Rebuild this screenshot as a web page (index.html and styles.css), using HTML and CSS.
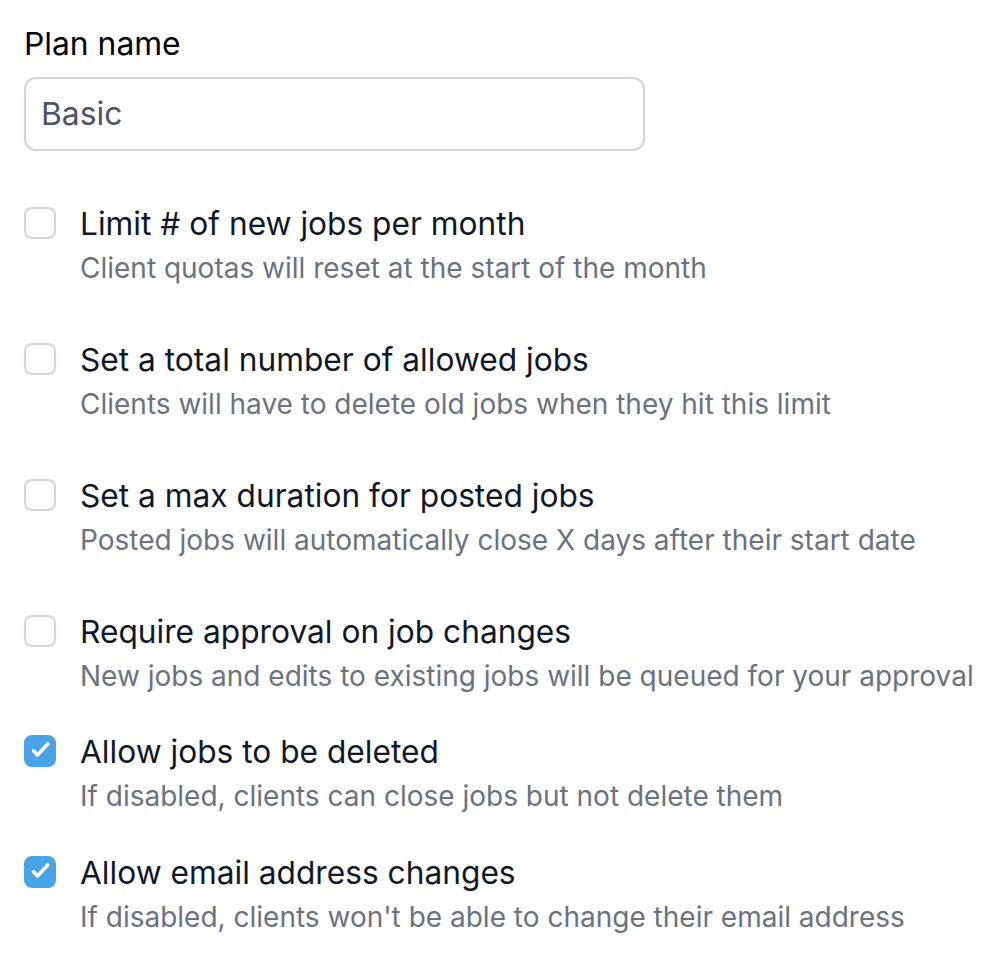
FILE: index.html
```html
<!DOCTYPE html>
<html>
<head>
<meta charset="utf-8">
<title>Plan settings</title>
<link rel="stylesheet" href="styles.css">
</head>
<body>
<div class="form">
	<label class="field-label">Plan name</label>
	<div class="text-input">Basic</div>

	<div class="options">
		<div class="option">
			<span class="check"></span>
			<div class="option-text">
				<div class="option-title">Limit # of new jobs per month</div>
				<div class="option-desc">Client quotas will reset at the start of the month</div>
			</div>
		</div>
		<div class="option">
			<span class="check"></span>
			<div class="option-text">
				<div class="option-title">Set a total number of allowed jobs</div>
				<div class="option-desc">Clients will have to delete old jobs when they hit this limit</div>
			</div>
		</div>
		<div class="option">
			<span class="check"></span>
			<div class="option-text">
				<div class="option-title">Set a max duration for posted jobs</div>
				<div class="option-desc">Posted jobs will automatically close X days after their start date</div>
			</div>
		</div>
		<div class="option">
			<span class="check"></span>
			<div class="option-text">
				<div class="option-title">Require approval on job changes</div>
				<div class="option-desc">New jobs and edits to existing jobs will be queued for your approval</div>
			</div>
		</div>
		<div class="option option-tight">
			<span class="check checked"><svg viewBox="0 0 28 28"><path d="M7.5 13.8l4 4.2 10.3-11" fill="none" stroke="#fff" stroke-width="3.6" stroke-linecap="round" stroke-linejoin="round"/></svg></span>
			<div class="option-text">
				<div class="option-title">Allow jobs to be deleted</div>
				<div class="option-desc">If disabled, clients can close jobs but not delete them</div>
			</div>
		</div>
		<div class="option option-tight">
			<span class="check checked"><svg viewBox="0 0 28 28"><path d="M7.5 13.8l4 4.2 10.3-11" fill="none" stroke="#fff" stroke-width="3.6" stroke-linecap="round" stroke-linejoin="round"/></svg></span>
			<div class="option-text">
				<div class="option-title">Allow email address changes</div>
				<div class="option-desc">If disabled, clients won't be able to change their email address</div>
			</div>
		</div>
	</div>
</div>
</body>
</html>
```

FILE: styles.css
```css
body { margin:0; background:#fff; font-family:Inter, "Noto Sans", sans-serif; }

.form { padding:24px 0 0 24px; }
.field-label { display:block; font-size:31.8px; line-height:40px; color:#000; }
.text-input { width:621px; height:74px; margin-top:13px; border:2px solid #d1d5db; border-radius:12px; padding:0 15px; box-sizing:border-box; font-size:31.8px; line-height:70px; color:#4b5563; }

.options { margin-top:51px; }
.option { display:flex; align-items:flex-start; gap:24px; margin-bottom:48px; }
.option-tight { margin-top:-16px; }
.option-tight:last-child { margin-top:-15px; }
.check { flex:none; width:32px; height:32px; margin-top:5px; border:2px solid #d1d5db; border-radius:8px; box-sizing:border-box; background:#fff; }
.check.checked { border-color:#4aa3e5; background:#4aa3e5; }
.check svg { display:block; width:28px; height:28px; }
.option-title { font-size:31.7px; line-height:44px; color:#111827; }
.option-desc { font-size:28px; line-height:44px; color:#6b7280; }
```
